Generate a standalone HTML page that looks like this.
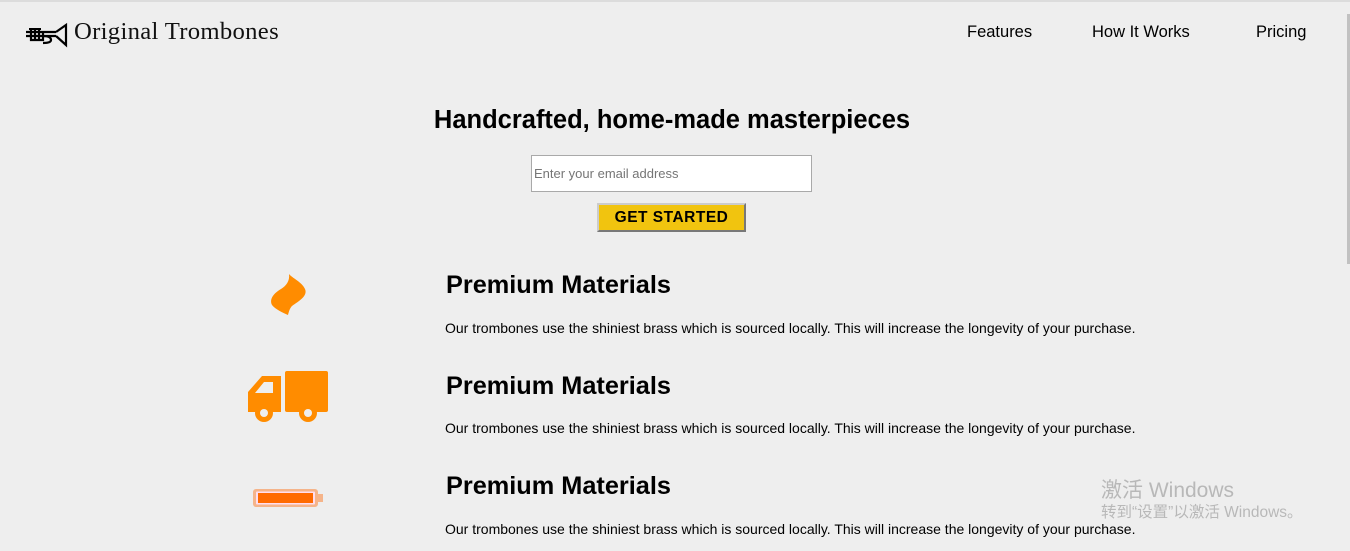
<!DOCTYPE html>
<html><head><meta charset="utf-8"><style>
html,body{margin:0;padding:0;}
body{width:1350px;height:551px;background:#eeeeee;position:relative;overflow:hidden;font-family:"Liberation Sans",sans-serif;border-top:2px solid #dcdcdc;box-sizing:border-box}
.a{position:absolute;white-space:nowrap}
.logo{left:74px;top:16px;font-family:"Liberation Serif",serif;font-size:24.7px;color:#111;letter-spacing:0.3px}
.nav{top:21px;font-size:16.5px;color:#000}
h1{position:absolute;margin:0;left:0;width:1344px;text-align:center;top:104px;font-size:25.5px;font-weight:bold}
.inp{left:531px;top:153px;background:#fff;border:1px solid #a9a9a9;font-size:13px;color:#757575;line-height:35px;padding-left:2px;box-sizing:border-box;width:281px;height:37px}
.btn{left:597px;top:201px;width:149px;height:29px;background:#f1c40f;border:2px outset #ccc;box-sizing:border-box;font-weight:bold;font-size:15.5px;text-align:center;line-height:25px;letter-spacing:0.5px}
.t{left:446px;font-size:25.3px;font-weight:bold}
.p{left:445px;font-size:14px;color:#000}
.w{left:1101px;color:#b8b8b8;font-family:"Liberation Sans","Noto Sans CJK SC",sans-serif}
.sb{left:1347px;top:12px;width:3px;height:250px;background:#c1c1c1}
</style></head><body>
<svg class="a" style="left:25px;top:20px" width="44" height="26" viewBox="0 0 44 26">
<g fill="none" stroke="#000" stroke-width="2.2">
<path d="M1 10h30 M1 14h30 M31 10 L41 3 V23 L31 14"/>
<path d="M6 8v10h12v-8 M10 8v10 M14 8v10"/>
<path d="M18 14c6 0 8 2 8 4s-3 3-8 3"/>
</g>
<path d="M4 6h12v2H4z" fill="#000"/>
</svg>
<div class="a logo">Original Trombones</div>
<div class="a nav" style="left:967px">Features</div>
<div class="a nav" style="left:1092px">How It Works</div>
<div class="a nav" style="left:1256px">Pricing</div>
<h1>Handcrafted, home-made masterpieces</h1>
<div class="a inp">Enter your email address</div>
<div class="a btn">GET STARTED</div>

<svg class="a" style="left:268px;top:271px" width="40" height="44" viewBox="0 0 40 44">
<path d="M21 1 C24 5 34 9 37 16 C40 23 31 28 24 33 C22 35 21 38 20 42 C15 40 7 36 4 32 C1 26 6 20 13 16 C18 13 22 8 21 1Z" fill="#ff8c00"/>
</svg>
<svg class="a" style="left:247px;top:368px" width="82" height="52" viewBox="0 0 82 52">
<g fill="#ff8c00">
<rect x="38" y="1" width="43" height="41" rx="2"/>
<path d="M1 22 L15 6 H34 V42 H1Z"/>
</g>
<path d="M8 23 L17 12 H26 V23Z" fill="#eee"/>
<circle cx="17" cy="43" r="9" fill="#ff8c00"/><circle cx="17" cy="43" r="4" fill="#eee"/>
<circle cx="61" cy="43" r="9" fill="#ff8c00"/><circle cx="61" cy="43" r="4" fill="#eee"/>
</svg>
<svg class="a" style="left:252px;top:486px" width="72" height="20" viewBox="0 0 72 20">
<rect x="1" y="1" width="65" height="18" rx="3" fill="#f5b48a"/>
<rect x="4" y="3.5" width="59" height="13" rx="1" fill="#fde"/>
<rect x="6" y="5" width="55" height="10" fill="#ff6a00"/>
<rect x="66" y="6" width="5" height="8" fill="#f5b48a"/>
</svg>

<div class="a t" style="top:269px">Premium Materials</div>
<div class="a p" style="top:318px">Our trombones use the shiniest brass which is sourced locally. This will increase the longevity of your purchase.</div>
<div class="a t" style="top:370px">Premium Materials</div>
<div class="a p" style="top:418px">Our trombones use the shiniest brass which is sourced locally. This will increase the longevity of your purchase.</div>
<div class="a t" style="top:470px">Premium Materials</div>
<div class="a p" style="top:519px">Our trombones use the shiniest brass which is sourced locally. This will increase the longevity of your purchase.</div>

<div class="a w" style="top:472px;font-size:21px">激活 Windows</div>
<div class="a w" style="top:498px;font-size:15.5px">转到“设置”以激活 Windows。</div>
<div class="a sb"></div>
</body></html>
